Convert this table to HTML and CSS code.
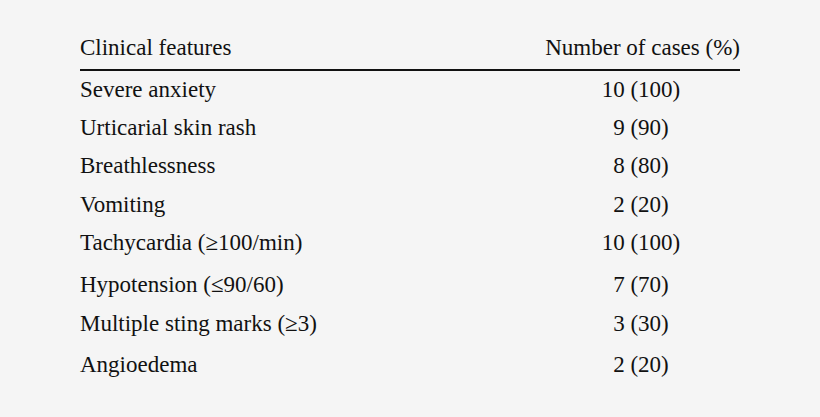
FILE: index.html
```
<!DOCTYPE html>
<html>
<head>
<meta charset="utf-8">
<link rel="stylesheet" href="styles.css">
</head>
<body>
<div class="table">
  <div class="row head">
    <div class="c1">Clinical features</div>
    <div class="c2 right">Number of cases (%)</div>
  </div>
  <div class="body">
    <div class="row r1"><div class="c1">Severe anxiety</div><div class="c2">10 (100)</div></div>
    <div class="row"><div class="c1">Urticarial skin rash</div><div class="c2">9 (90)</div></div>
    <div class="row"><div class="c1">Breathlessness</div><div class="c2">8 (80)</div></div>
    <div class="row"><div class="c1">Vomiting</div><div class="c2">2 (20)</div></div>
    <div class="row r5"><div class="c1">Tachycardia (≥100/min)</div><div class="c2">10 (100)</div></div>
    <div class="row r6"><div class="c1">Hypotension (≤90/60)</div><div class="c2">7 (70)</div></div>
    <div class="row r7"><div class="c1">Multiple sting marks (≥3)</div><div class="c2">3 (30)</div></div>
    <div class="row"><div class="c1">Angioedema</div><div class="c2">2 (20)</div></div>
  </div>
</div>
</body>
</html>
```
FILE: styles.css
```
html, body {
  margin: 0;
  padding: 0;
  background: #f5f5f5;
}
body {
  width: 820px;
  height: 417px;
  overflow: hidden;
  font-family: "Liberation Serif", "Times New Roman", serif;
  font-size: 23px;
  color: #111111;
}
.table {
  margin-left: 80px;
  width: 660px;
  padding-top: 29px;
}
.row {
  display: flex;
  justify-content: space-between;
  height: 38.5px;
  line-height: 38px;
  white-space: nowrap;
}
.head {
  height: 38px;
  padding-bottom: 1.5px;
  border-bottom: 2px solid #111111;
}
.r1 { height: 38px; }
.r5 { height: 42px; }
.r6 { height: 39px; }
.r7 { height: 41px; }
.c2 {
  width: 198px;
  text-align: center;
}
.c2.right {
  text-align: right;
}
```
